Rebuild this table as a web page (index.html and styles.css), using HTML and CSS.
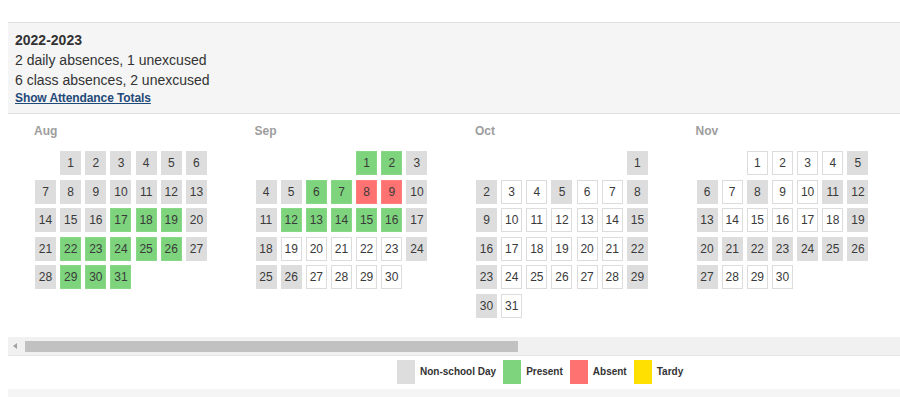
FILE: index.html
```html
<!DOCTYPE html>
<html>
<head>
<meta charset="utf-8">
<link rel="stylesheet" href="styles.css">
</head>
<body>
<div class="page">
  <div class="summary">
    <div class="year">2022-2023</div>
    <div class="line">2 daily absences, 1 unexcused</div>
    <div class="line">6 class absences, 2 unexcused</div>
    <a class="link" href="#">Show Attendance Totals</a>
  </div>
  <div class="scroll">
    <div class="months">
      <div class="month">
        <div class="mname">Aug</div>
        <div class="grid">
          <span class="day ns c2">1</span><span class="day ns">2</span><span class="day ns">3</span><span class="day ns">4</span><span class="day ns">5</span><span class="day ns">6</span>
          <span class="day ns">7</span><span class="day ns">8</span><span class="day ns">9</span><span class="day ns">10</span><span class="day ns">11</span><span class="day ns">12</span><span class="day ns">13</span>
          <span class="day ns">14</span><span class="day ns">15</span><span class="day ns">16</span><span class="day pr">17</span><span class="day pr">18</span><span class="day pr">19</span><span class="day ns">20</span>
          <span class="day ns">21</span><span class="day pr">22</span><span class="day pr">23</span><span class="day pr">24</span><span class="day pr">25</span><span class="day pr">26</span><span class="day ns">27</span>
          <span class="day ns">28</span><span class="day pr">29</span><span class="day pr">30</span><span class="day pr">31</span>
        </div>
      </div>
      <div class="month">
        <div class="mname">Sep</div>
        <div class="grid">
          <span class="day pr c5">1</span><span class="day pr">2</span><span class="day ns">3</span>
          <span class="day ns">4</span><span class="day ns">5</span><span class="day pr">6</span><span class="day pr">7</span><span class="day ab">8</span><span class="day ab">9</span><span class="day ns">10</span>
          <span class="day ns">11</span><span class="day pr">12</span><span class="day pr">13</span><span class="day pr">14</span><span class="day pr">15</span><span class="day pr">16</span><span class="day ns">17</span>
          <span class="day ns">18</span><span class="day">19</span><span class="day">20</span><span class="day">21</span><span class="day">22</span><span class="day">23</span><span class="day ns">24</span>
          <span class="day ns">25</span><span class="day ns">26</span><span class="day">27</span><span class="day">28</span><span class="day">29</span><span class="day">30</span>
        </div>
      </div>
      <div class="month">
        <div class="mname">Oct</div>
        <div class="grid">
          <span class="day ns c7">1</span>
          <span class="day ns">2</span><span class="day">3</span><span class="day">4</span><span class="day ns">5</span><span class="day">6</span><span class="day">7</span><span class="day ns">8</span>
          <span class="day ns">9</span><span class="day">10</span><span class="day">11</span><span class="day">12</span><span class="day">13</span><span class="day">14</span><span class="day ns">15</span>
          <span class="day ns">16</span><span class="day">17</span><span class="day">18</span><span class="day">19</span><span class="day">20</span><span class="day">21</span><span class="day ns">22</span>
          <span class="day ns">23</span><span class="day">24</span><span class="day">25</span><span class="day">26</span><span class="day">27</span><span class="day">28</span><span class="day ns">29</span>
          <span class="day ns">30</span><span class="day">31</span>
        </div>
      </div>
      <div class="month">
        <div class="mname">Nov</div>
        <div class="grid">
          <span class="day c3">1</span><span class="day">2</span><span class="day">3</span><span class="day">4</span><span class="day ns">5</span>
          <span class="day ns">6</span><span class="day">7</span><span class="day ns">8</span><span class="day">9</span><span class="day">10</span><span class="day ns">11</span><span class="day ns">12</span>
          <span class="day ns">13</span><span class="day">14</span><span class="day">15</span><span class="day">16</span><span class="day">17</span><span class="day">18</span><span class="day ns">19</span>
          <span class="day ns">20</span><span class="day ns">21</span><span class="day ns">22</span><span class="day ns">23</span><span class="day ns">24</span><span class="day ns">25</span><span class="day ns">26</span>
          <span class="day ns">27</span><span class="day">28</span><span class="day">29</span><span class="day">30</span>
        </div>
      </div>
    </div>
    <div class="hbar">
      <span class="arrow"></span>
      <span class="thumb" style="width:493px"></span>
    </div>
  </div>
  <div class="legend">
    <span class="sw ns"></span><span class="lt">Non-school Day</span>
    <span class="sw pr"></span><span class="lt">Present</span>
    <span class="sw ab"></span><span class="lt">Absent</span>
    <span class="sw td"></span><span class="lt">Tardy</span>
  </div>
  <div class="footer"></div>
</div>
</body>
</html>
```
FILE: styles.css
```css
html, body {
  margin: 0;
  padding: 0;
  background: #fff;
  overflow: hidden;
}
body {
  font-family: "Liberation Sans", Arial, sans-serif;
  color: #333;
}
.page {
  padding: 22px 0 0 8px;
}
.summary {
  background: #f5f5f5;
  border-top: 1px solid #e2e2e2;
  border-bottom: 1px solid #e2e2e2;
  padding: 7px 7px 7px 7px;
}
.year {
  font-size: 14px;
  font-weight: bold;
  line-height: 20px;
  color: #333;
}
.line {
  font-size: 14px;
  line-height: 20px;
  color: #333;
}
.link {
  display: block;
  font-size: 12px;
  font-weight: bold;
  line-height: 16px;
  color: #1f4a78;
  text-decoration: underline;
  letter-spacing: -0.1px;
}
.scroll {
  overflow: hidden;
}
.months {
  display: flex;
  gap: 48.5px;
  padding: 10px 0 19px 27px;
}
.month {
  width: 172px;
  flex: none;
}
.mname {
  font-size: 12px;
  font-weight: bold;
  line-height: 14px;
  color: #9d9d9d;
  margin: 0 0 13px -1px;
}
.grid {
  display: grid;
  grid-template-columns: repeat(7, 21px);
  grid-auto-rows: 24px;
  column-gap: 4.17px;
  row-gap: 4.5px;
}
.day {
  box-sizing: border-box;
  border: 1px solid #dcdcdc;
  background: #fff;
  display: flex;
  align-items: center;
  justify-content: center;
  font-size: 12px;
  color: #3a3a3a;
}
.day.ns {
  background: #dddddd;
  border-color: #dddddd;
}
.day.pr {
  background: #7dd47d;
  border-color: #88d888;
}
.day.ab {
  background: #ff7272;
  border-color: #ff8080;
}
.c2 { grid-column-start: 2; }
.c3 { grid-column-start: 3; }
.c4 { grid-column-start: 4; }
.c5 { grid-column-start: 5; }
.c7 { grid-column-start: 7; }
.hbar {
  display: flex;
  align-items: flex-start;
  height: 18px;
  background: #f1f1f1;
}
.arrow {
  width: 0;
  height: 0;
  margin: 6px 6px 0 5px;
  border-right: 4px solid #a3a3a3;
  border-top: 3.5px solid transparent;
  border-bottom: 3.5px solid transparent;
}
.thumb {
  height: 11px;
  margin: 4px 0 0 2px;
  background: #c1c1c1;
}
.legend {
  display: flex;
  align-items: center;
  border-top: 1px solid #e6e6e6;
  padding: 4px 0 5px 389px;
}
.sw {
  width: 18px;
  height: 24px;
  margin-right: 5px;
}
.sw.ns { background: #dddddd; }
.sw.pr { background: #7dd47d; }
.sw.ab { background: #ff7272; }
.sw.td { background: #ffe000; }
.lt {
  font-size: 10px;
  font-weight: bold;
  color: #333;
  margin-right: 7px;
}
.footer {
  height: 12px;
  background: #f5f5f5;
}
```
